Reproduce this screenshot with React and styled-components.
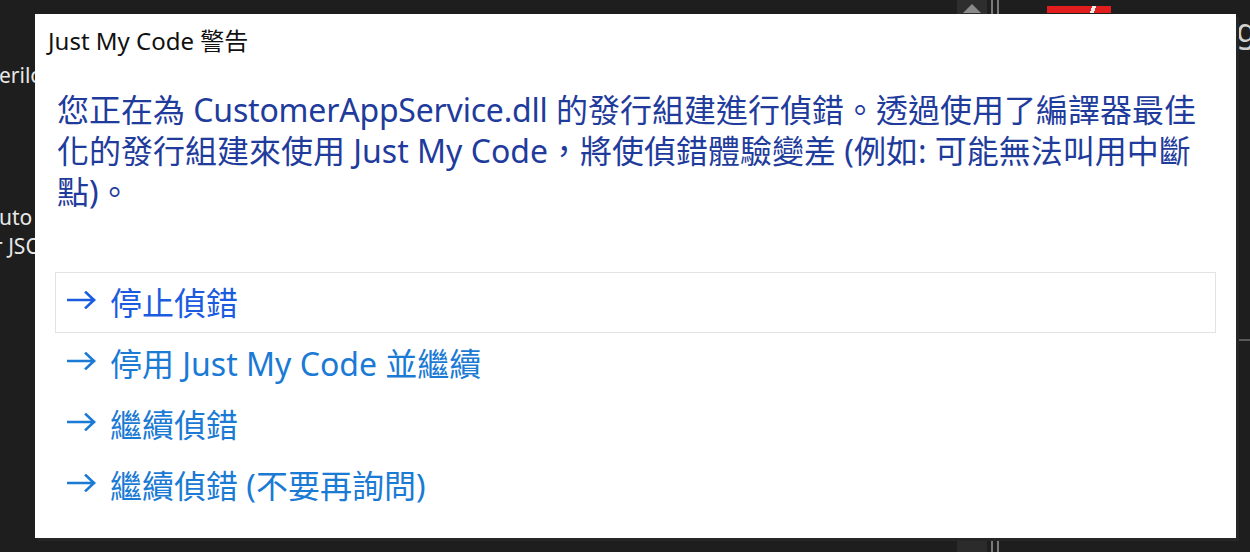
import React from 'react'
import styled, { createGlobalStyle } from 'styled-components'

const GlobalStyle = createGlobalStyle`
    html, body {
        margin: 0;
        padding: 0;
        background: #1e1e1e;
    }
    body {
        font-family: "Noto Sans", "Noto Sans CJK TC", sans-serif;
    }
`

const options = [
    { label: '停止偵錯', focused: true },
    { label: '停用 Just My Code 並繼續' },
    { label: '繼續偵錯' },
    { label: '繼續偵錯 (不要再詢問)' },
]

function Arrow() {
    return (
        <svg width="29" height="18" viewBox="0 0 29 18" fill="none">
            <path d="M1 9 H27 M19 1.5 L27 9 L19 16.5" stroke="currentColor" strokeWidth="2.6" strokeLinecap="square" />
        </svg>
    )
}

function App() {
    return (
        <Screen>
            <GlobalStyle />
            <Backdrop>
                <LeftStrip>
                    <EditorLine $top={62}>erilog</EditorLine>
                    <EditorLine $top={116}>uto</EditorLine>
                    <EditorLine $top={3} $indent={-6}>r JSON</EditorLine>
                </LeftStrip>
                <Middle />
                <ScrollColumn>
                    <ScrollTrack>
                        <UpButton>
                            <Triangle />
                        </UpButton>
                        <Rail />
                        <Rail />
                    </ScrollTrack>
                    <ScrollTrack>
                        <ThumbPatch />
                        <Rail />
                        <Rail />
                    </ScrollTrack>
                </ScrollColumn>
                <RightPanel>
                    <RedBar />
                    <CutGlyph>g</CutGlyph>
                    <Divider />
                </RightPanel>
            </Backdrop>

            <Dialog>
                <Title>Just My Code 警告</Title>
                <Message>
                    <span>您正在為 <Latin>CustomerAppService.dll</Latin> 的發行組建進行偵錯。透過使用了編譯器最佳</span>
                    <span>化的發行組建來使用 Just My Code，將使偵錯體驗變差 (例如: 可能無法叫用中斷</span>
                    <span>點)。</span>
                </Message>
                <Options>
                    {options.map((o) => (
                        <Option key={o.label} $focused={o.focused}>
                            <Arrow />
                            <OptionLabel>{o.label}</OptionLabel>
                        </Option>
                    ))}
                </Options>
            </Dialog>
        </Screen>
    )
}

export default App


const Screen = styled.div`
    position: relative;
    width: 1250px;
    height: 552px;
    overflow: hidden;
    background: #1e1e1e;
`

const Backdrop = styled.div`
    display: flex;
    height: 100%;
`

const LeftStrip = styled.div`
    width: 35px;
    overflow: hidden;
    display: flex;
    flex-direction: column;
`

const EditorLine = styled.div`
    margin-top: ${(p) => p.$top}px;
    margin-left: ${(p) => p.$indent || -1}px;
    font-size: 21px;
    line-height: 26px;
    color: #e8e8e8;
    white-space: nowrap;
`

const Middle = styled.div`
    flex: 1;
`

const ScrollColumn = styled.div`
    width: 44px;
    display: flex;
    flex-direction: column;
    justify-content: space-between;
`

const ScrollTrack = styled.div`
    display: flex;
    height: 14px;
    gap: 4px;
`

const UpButton = styled.div`
    width: 30px;
    height: 14px;
    background: #2e2e2e;
    display: flex;
    justify-content: center;
    align-items: flex-end;
`

const Triangle = styled.div`
    width: 0;
    height: 0;
    margin-bottom: 1px;
    border-left: 9px solid transparent;
    border-right: 9px solid transparent;
    border-bottom: 9px solid #8a8a8a;
`

const ThumbPatch = styled.div`
    width: 30px;
    height: 14px;
    background: #2b2b2b;
`

const Rail = styled.div`
    width: 2px;
    background: #7a7a7a;
`

const RightPanel = styled.div`
    position: relative;
    width: 249px;
    padding: 6px 0 0 46px;
    box-sizing: border-box;
`

const RedBar = styled.div`
    width: 64px;
    height: 7px;
    background: linear-gradient(110deg, #e11d1d 0 68%, #eeeeee 68% 74%, #e11d1d 74%);
`

const CutGlyph = styled.div`
    position: absolute;
    right: -6px;
    top: 8px;
    font-size: 32px;
    color: #d0d0d0;
`

const Divider = styled.div`
    position: absolute;
    right: 0;
    top: 339px;
    width: 12px;
    height: 2px;
    background: #5a5a5a;
`

const Dialog = styled.div`
    position: absolute;
    left: 35px;
    top: 14px;
    width: 1201px;
    height: 524px;
    box-sizing: border-box;
    background: #ffffff;
    box-shadow: 3px 3px 0 #262626;
    padding: 12px 20px 0 20px;
    display: flex;
    flex-direction: column;
`

const Title = styled.div`
    margin-left: -7px;
    font-size: 24px;
    line-height: 30px;
    color: #111111;
`

const Message = styled.p`
    margin: 33px 0 0 2px;
    font-size: 32px;
    line-height: 41px;
    color: #1f3c9c;
    white-space: nowrap;

    span {
        display: block;
    }
`

const Latin = styled.span`
    && {
        display: inline;
    }
    letter-spacing: -0.2px;
`

const Options = styled.div`
    margin-top: 60px;
    display: flex;
    flex-direction: column;
`

const Option = styled.div`
    height: 61px;
    box-sizing: border-box;
    display: flex;
    align-items: center;
    gap: 14px;
    padding-left: 11px;
    border: 1px solid ${(p) => (p.$focused ? '#e3e3e3' : 'transparent')};
    color: ${(p) => (p.$focused ? '#1a5be0' : '#1a7ad4')};

    svg {
        margin-top: -5px;
        flex-shrink: 0;
    }
`

const OptionLabel = styled.span`
    font-size: 32px;
    line-height: 40px;
`
